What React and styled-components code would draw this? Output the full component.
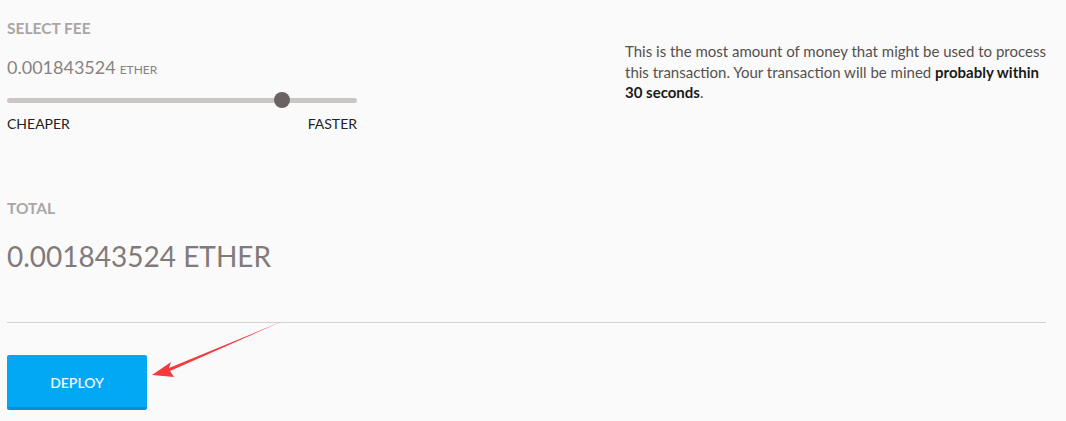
import React from "react";
import styled, { createGlobalStyle } from "styled-components";

const Global = createGlobalStyle`
  html, body { margin: 0; padding: 0; background: #fafafa; }
  body { font-family: "Source Sans Pro", Lato, "Noto Sans", sans-serif; }
`;

const Page = styled.div`
  position: relative;
  width: 1066px;
  height: 421px;
  padding: 0 20px 0 7px;
  box-sizing: border-box;
  overflow: hidden;
`;

const TopRow = styled.div`
  display: flex;
  align-items: flex-start;
`;

const FeeColumn = styled.div`
  flex: 0 0 350px;
  width: 350px;
  padding-top: 20px;
`;

const Label = styled.div`
  font-size: 15.5px;
  font-weight: 700;
  color: #aaa6a6;
  text-transform: uppercase;
  line-height: 16px;
`;

const FeeValue = styled.div`
  margin-top: 20px;
  font-size: 18px;
  color: #8a8282;
  line-height: 22px;
`;

const Unit = styled.span`
  font-size: 12px;
  margin-left: 4px;
`;

const Slider = styled.div`
  position: relative;
  margin-top: 11px;
  height: 16px;
  display: flex;
  align-items: center;
`;

const Track = styled.div`
  width: 100%;
  height: 5px;
  border-radius: 3px;
  background: #cbc6c6;
`;

const Thumb = styled.div`
  position: absolute;
  top: 0;
  width: 16px;
  height: 16px;
  border-radius: 50%;
  background: #6b6264;
  transform: translateX(-50%);
`;

const Scale = styled.div`
  display: flex;
  justify-content: space-between;
  margin-top: 7px;
  font-size: 14px;
  color: #222;
  line-height: 18px;
`;

const Note = styled.p`
  margin: 41px 0 0 268px;
  width: 425px;
  font-size: 15px;
  line-height: 20.5px;
  color: #55504f;
  strong { color: #1a1a1a; font-weight: 700; }
`;

const TotalBlock = styled.div`
  margin-top: 67px;
`;

const TotalValue = styled.div`
  margin-top: 22px;
  font-size: 28px;
  line-height: 36px;
  color: #827a7a;
`;

const Divider = styled.hr`
  margin: 48px 0 0;
  border: 0;
  border-top: 1px solid #d5d0d0;
`;

const DeployButton = styled.button`
  display: block;
  margin-top: 32px;
  width: 140px;
  height: 55px;
  border: 0;
  border-bottom: 3px solid #0690d6;
  border-radius: 2px;
  background: #02a8f3;
  color: #eef8ff;
  font-family: inherit;
  font-size: 14px;
  font-weight: 600;
  padding-top: 3px;
`;

const Annotation = styled.svg`
  position: absolute;
  left: 0;
  top: 0;
  pointer-events: none;
`;

export default function App() {
  return (
    <Page>
      <Global />
      <TopRow>
        <FeeColumn>
          <Label>Select Fee</Label>
          <FeeValue>
            0.001843524<Unit>ETHER</Unit>
          </FeeValue>
          <Slider>
            <Track />
            <Thumb style={{ left: `${(275 / 350) * 100}%` }} />
          </Slider>
          <Scale>
            <span>CHEAPER</span>
            <span>FASTER</span>
          </Scale>
        </FeeColumn>
        <Note>
          This is the most amount of money that might be used to process this
          transaction. Your transaction will be mined <strong>probably within 30 seconds</strong>.
        </Note>
      </TopRow>
      <TotalBlock>
        <Label>Total</Label>
        <TotalValue>0.001843524 ETHER</TotalValue>
      </TotalBlock>
      <Divider />
      <DeployButton>DEPLOY</DeployButton>
      <Annotation width="1066" height="421" viewBox="0 0 1066 421">
        <polygon
          points="283,321 169,368 171,362 152,375 174,377 170,371"
          fill="#f53b3b"
        />
      </Annotation>
    </Page>
  );
}
